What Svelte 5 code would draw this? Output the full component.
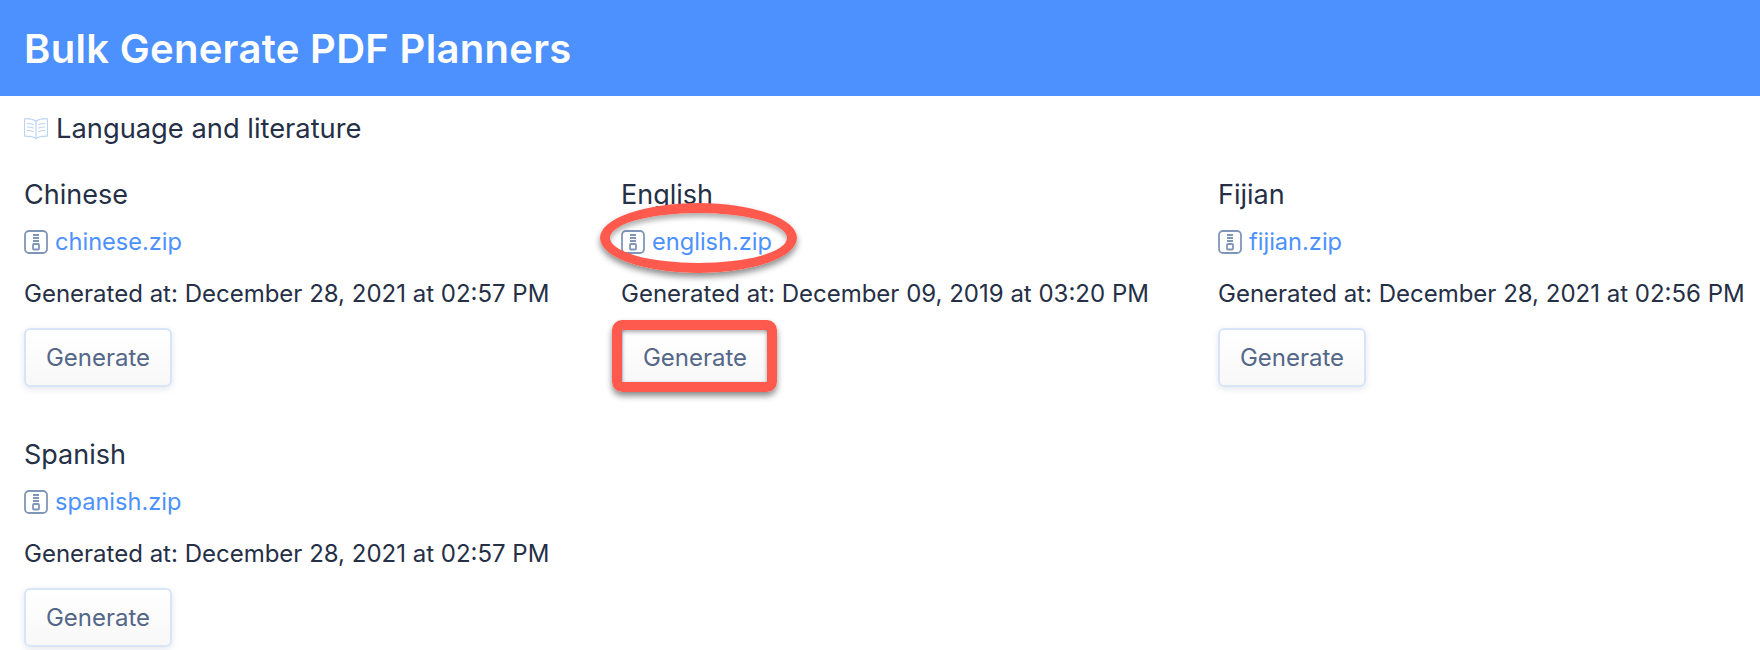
<script>
    const subjects = [
        { name: 'Chinese', file: 'chinese.zip', generated: 'December 28, 2021 at 02:57 PM' },
        { name: 'English', file: 'english.zip', generated: 'December 09, 2019 at 03:20 PM' },
        { name: 'Fijian', file: 'fijian.zip', generated: 'December 28, 2021 at 02:56 PM' },
        { name: 'Spanish', file: 'spanish.zip', generated: 'December 28, 2021 at 02:57 PM' }
    ];
</script>

<div class="page">
    <header class="top">
        <h1>Bulk Generate PDF Planners</h1>
    </header>

    <main class="content">
        <h2 class="group">
            <svg class="book" viewBox="0 0 24 24" fill="none" stroke="#bcd3f3" stroke-width="1.200" stroke-linecap="round" stroke-linejoin="round">
                <path d="M12 5.200C10 3.400 6 2.600 1.500 2.600c-.7 0-1 .4-1 1v15.600c0 .6.4 1 1 1 4.500 0 8.500.6 10.500 2.400 2-1.800 6-2.400 10.500-2.400.6 0 1-.4 1-1V3.600c0-.6-.3-1-1-1C18 2.600 14 3.400 12 5.200z"/>
                <path d="M12 5.200v17.400"/>
                <path d="M3.500 7.500c2 0 4 .3 5.800 1M3.500 11c2 0 4 .3 5.800 1M3.500 14.500c2 0 4 .3 5.800 1M20.500 7.500c-2 0-4 .3-5.800 1M20.500 11c-2 0-4 .3-5.800 1M20.500 14.500c-2 0-4 .3-5.800 1"/>
            </svg>
            Language and literature
        </h2>

        <div class="grid">
            {#each subjects as subject}
                <section class="subject">
                    <h3>{subject.name}</h3>
                    <a class="file" href="#top">
                        <svg class="zip" viewBox="0 0 24 24" fill="none" stroke="#8096b8" stroke-width="1.800">
                            <rect x="1" y="1" width="22" height="22" rx="4"/>
                            <path d="M9 5h6M9 8h6M9 11h6" stroke-width="1.800"/>
                            <rect x="9" y="14" width="6" height="5.500" rx="1"/>
                        </svg>
                        {subject.file}
                    </a>
                    <p>Generated at: {subject.generated}</p>
                    <button type="button">Generate</button>
                </section>
            {/each}
        </div>
    </main>

    <div class="mark-ellipse"></div>
    <div class="mark-box"></div>
</div>

<style>
    :global(body) {
        margin: 0;
        background: #fff;
        overflow: hidden;
    }

    .page {
        position: relative;
        height: 650px;
        overflow: hidden;
        font-family: Inter, "Noto Sans", sans-serif;
        color: #252f46;
    }

    .top {
        background: #4c91fd;
        height: 96px;
        display: flex;
        align-items: center;
        padding: 0 24px;
    }

    h1 {
        margin: 0;
        color: #fff;
        font-size: 40px;
        font-weight: 600;
        letter-spacing: 0.3px;
    }

    .content {
        padding: 14px 24px 0;
    }

    .group {
        display: flex;
        align-items: center;
        gap: 8px;
        margin: 0;
        height: 36px;
        font-size: 27.300px;
        font-weight: 400;
    }

    .book {
        width: 24px;
        height: 24px;
    }

    .grid {
        display: grid;
        grid-template-columns: repeat(3, 573px);
        column-gap: 24px;
        row-gap: 50px;
        margin-top: 31px;
    }

    .subject {
        display: flex;
        flex-direction: column;
        align-items: flex-start;
    }

    h3 {
        margin: 0;
        font-size: 27px;
        line-height: 36px;
        font-weight: 400;
    }

    .file {
        display: flex;
        align-items: center;
        gap: 7px;
        margin-top: 11px;
        font-size: 23.600px;
        line-height: 36px;
        color: #4c91fd;
        text-decoration: none;
    }

    .zip {
        width: 24px;
        height: 24px;
    }

    p {
        margin: 18px 0 0;
        font-size: 24px;
        line-height: 32px;
    }

    button {
        margin-top: 18px;
        width: 148px;
        height: 59px;
        border: 2px solid #d8e5f8;
        border-radius: 6px;
        background: linear-gradient(#ffffff, #f8f8f9);
        box-shadow: 0 2px 6px rgba(60, 80, 120, 0.14);
        color: #546788;
        font-family: inherit;
        font-size: 24px;
    }

    .mark-ellipse {
        position: absolute;
        left: 600px;
        top: 203px;
        width: 197px;
        height: 70px;
        box-sizing: border-box;
        border: 10px solid #ff5a4d;
        border-radius: 50%;
        box-shadow: 0 4px 6px rgba(0, 0, 0, 0.45), inset 0 4px 5px rgba(0, 0, 0, 0.3);
    }

    .mark-box {
        position: absolute;
        left: 612px;
        top: 320px;
        width: 165px;
        height: 72px;
        box-sizing: border-box;
        border: 10px solid #ff5a4d;
        border-radius: 10px;
        box-shadow: 0 4px 6px rgba(0, 0, 0, 0.45), inset 0 2px 4px rgba(0, 0, 0, 0.35);
    }
</style>
